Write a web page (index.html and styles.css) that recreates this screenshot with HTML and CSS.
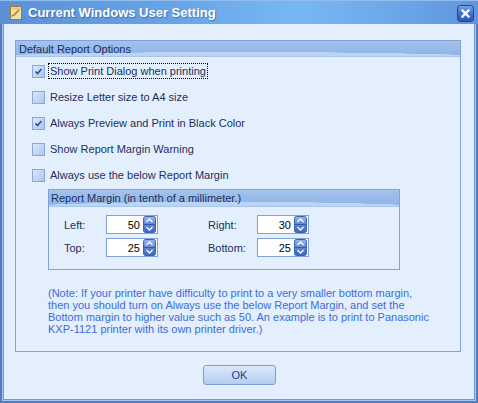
FILE: index.html
```html
<!DOCTYPE html>
<html lang="en">
<head>
    <meta charset="UTF-8">
    <title>Current Windows User Setting</title>
    <link rel="stylesheet" href="styles.css">
</head>
<body>
    <div class="window">
        <div class="titlebar">
            <svg class="app-icon" width="13" height="16" viewBox="0 0 13 16">
                <rect x="0.5" y="1.5" width="11" height="13" fill="#f3e2a6" stroke="#9b7a3a"/>
                <rect x="1.5" y="2.5" width="9" height="2" fill="#e0c477"/>
                <path d="M2 12 L9 5" stroke="#c98a3a" stroke-width="2"/>
                <path d="M2 12 L3 10" stroke="#5a4020" stroke-width="1"/>
                <path d="M1.5 12.5 L4 11" stroke="#ffffff" stroke-width="1"/>
            </svg>
            <span class="title">Current Windows User Setting</span>
            <svg class="close" width="17" height="17" viewBox="0 0 17 17">
                <defs>
                    <linearGradient id="closeGrad" x1="0" y1="0" x2="0" y2="1">
                        <stop offset="0" stop-color="#7ba3ea"/>
                        <stop offset="0.45" stop-color="#4373d4"/>
                        <stop offset="1" stop-color="#2b54b2"/>
                    </linearGradient>
                </defs>
                <rect x="0.5" y="0.5" width="16" height="16" rx="3" fill="url(#closeGrad)" stroke="#22449c"/>
                <path d="M5.5 5.5 L11.5 11.5 M11.5 5.5 L5.5 11.5" stroke="#ffffff" stroke-width="2.4" stroke-linecap="square"/>
            </svg>
        </div>
        <div class="frame">
            <div class="client">
                <div class="group">
                    <div class="group-head">Default Report Options</div>
                    <div class="group-body">
                        <div class="check-row">
                            <span class="checkbox checked"><svg width="11" height="11" viewBox="0 0 11 11"><path d="M2.5 5.5 L4.5 7.5 L8.5 3" fill="none" stroke="#2b4d9a" stroke-width="1.6"/></svg></span>
                            <span class="label focused">Show Print Dialog when printing</span>
                        </div>
                        <div class="check-row">
                            <span class="checkbox"></span>
                            <span class="label">Resize Letter size to A4 size</span>
                        </div>
                        <div class="check-row">
                            <span class="checkbox checked"><svg width="11" height="11" viewBox="0 0 11 11"><path d="M2.5 5.5 L4.5 7.5 L8.5 3" fill="none" stroke="#2b4d9a" stroke-width="1.6"/></svg></span>
                            <span class="label">Always Preview and Print in Black Color</span>
                        </div>
                        <div class="check-row">
                            <span class="checkbox"></span>
                            <span class="label">Show Report Margin Warning</span>
                        </div>
                        <div class="check-row">
                            <span class="checkbox"></span>
                            <span class="label">Always use the below Report Margin</span>
                        </div>

                        <div class="margin-group">
                            <div class="group-head small">Report Margin (in tenth of a millimeter.)</div>
                            <div class="margin-grid">
                                <span class="field-label">Left:</span>
                                <div class="spin-edit"><span class="value">50</span><span class="spin"></span></div>
                                <span class="field-label">Right:</span>
                                <div class="spin-edit"><span class="value">30</span><span class="spin"></span></div>
                                <span class="field-label">Top:</span>
                                <div class="spin-edit"><span class="value">25</span><span class="spin"></span></div>
                                <span class="field-label">Bottom:</span>
                                <div class="spin-edit"><span class="value">25</span><span class="spin"></span></div>
                            </div>
                        </div>

                        <p class="note">(Note: If your printer have difficulty to print to a very smaller bottom margin, then you should turn on Always use the below Report Margin, and set the Bottom margin to higher value such as 50. An example is to print to Panasonic KXP-1121 printer with its own printer driver.)</p>
                    </div>
                </div>
                <div class="footer">
                    <button class="ok-button">OK</button>
                </div>
            </div>
        </div>
    </div>

    <script>
        // same spinner graphic in every edit box
        var spinSvg = '<svg width="13" height="17" viewBox="0 0 13 17">' +
            '<defs><linearGradient id="spinGrad" x1="0" y1="0" x2="0" y2="1">' +
            '<stop offset="0" stop-color="#9ab8ee"/><stop offset="0.5" stop-color="#5f86d6"/><stop offset="1" stop-color="#3e66bd"/>' +
            '</linearGradient></defs>' +
            '<rect x="0.5" y="0.5" width="12" height="16" rx="2" fill="url(#spinGrad)" stroke="#3d62b4"/>' +
            '<line x1="1" y1="8.5" x2="12" y2="8.5" stroke="#3559a8"/>' +
            '<path d="M3.5 6 L6.5 3 L9.5 6" fill="none" stroke="#ffffff" stroke-width="1.3"/>' +
            '<path d="M3.5 11 L6.5 14 L9.5 11" fill="none" stroke="#ffffff" stroke-width="1.3"/>' +
            '</svg>';
        document.querySelectorAll('.spin').forEach(function (el) {
            el.innerHTML = spinSvg;
        });
    </script>
</body>
</html>
```

FILE: styles.css
```css
* {
    margin: 0;
    padding: 0;
    box-sizing: border-box;
}

body {
    margin: 0;
    font-family: 'Liberation Sans', Arial, sans-serif;
    font-size: 11px;
    color: #1c2f5e;
}

.window {
    width: 478px;
    height: 403px;
    display: flex;
    flex-direction: column;
}

/* Title bar */
.titlebar {
    height: 24px;
    display: flex;
    align-items: center;
    padding: 0 4px 0 10px;
    background: linear-gradient(90deg, #5b90d6 0%, #68a3e5 35%, #77b8f3 62%, #6fa9ea 80%, #5f95dc 100%);
    border-top: 1px solid #8fbdf0;
}

.app-icon {
    margin-top: 1px;
}

.title {
    flex: 1;
    margin-left: 5px;
    color: #fff;
    font-weight: bold;
    font-size: 13px;
    text-shadow: 1px 1px 1px rgba(20, 50, 110, 0.45);
}

.close {
    margin-top: 1px;
}

/* Window frame */
.frame {
    flex: 1;
    display: flex;
    border: 2px solid #4f7cc2;
    border-top: 0;
    background: #a9c6ee;
    padding: 0 1px 1px;
}

.client {
    flex: 1;
    display: flex;
    flex-direction: column;
    background: #e3effc;
    border: 1px solid #6e99d6;
    border-top: 0;
    padding: 16px 13px 0 11px;
}

/* Group boxes */
.group {
    height: 312px;
    border: 1px solid #7fa3d9;
}

.group-head {
    height: 16px;
    line-height: 16px;
    padding-left: 3px;
    border-bottom: 1px solid #a9c5ec;
    background:
        radial-gradient(130% 120% at 50% 140%, #bcd5f4 55%, rgba(188, 213, 244, 0) 56%),
        linear-gradient(#a4c3ec, #8db3e6);
    color: #1c2f5e;
}

.group-body {
    padding: 1px 0 0 16px;
}

.check-row {
    height: 26px;
    display: flex;
    align-items: center;
    gap: 3px;
}

.checkbox {
    width: 13px;
    height: 13px;
    border: 1px solid #86a8dc;
    background: linear-gradient(135deg, #dde8f8, #aec6ec);
    display: flex;
    align-items: center;
    justify-content: center;
}

.label {
    padding: 1px 1px;
    border: 1px dotted transparent;
}

.label.focused {
    border-color: #000;
}

/* Report margin box */
.margin-group {
    width: 352px;
    height: 81px;
    margin: 1px 0 0 16px;
    border: 1px solid #7fa3d9;
}

.group-head.small {
    height: 17px;
    line-height: 17px;
    padding-left: 2px;
}

.margin-grid {
    display: grid;
    grid-template-columns: 42px 102px 49px 52px;
    grid-auto-rows: 19px;
    row-gap: 4px;
    align-items: center;
    padding: 8px 0 0 15px;
}

.spin-edit {
    width: 52px;
    height: 19px;
    border: 1px solid #7fa3d9;
    background: #fff;
    display: flex;
    align-items: center;
    justify-content: flex-end;
    padding-right: 1px;
}

.value {
    padding-right: 3px;
    color: #000;
}

.spin {
    display: flex;
}

.note {
    width: 385px;
    margin: 17px 0 0 16px;
    line-height: 12px;
    color: #3b6ce0;
}

/* Footer */
.footer {
    display: flex;
    justify-content: center;
    padding: 13px 0 0 3px;
}

.ok-button {
    width: 73px;
    height: 20px;
    border: 1px solid #7b9fd8;
    border-radius: 3px;
    background: linear-gradient(#dde9fa, #b3cdf1);
    color: #22408f;
    font-family: 'Liberation Sans', Arial, sans-serif;
    font-size: 11px;
}
```
